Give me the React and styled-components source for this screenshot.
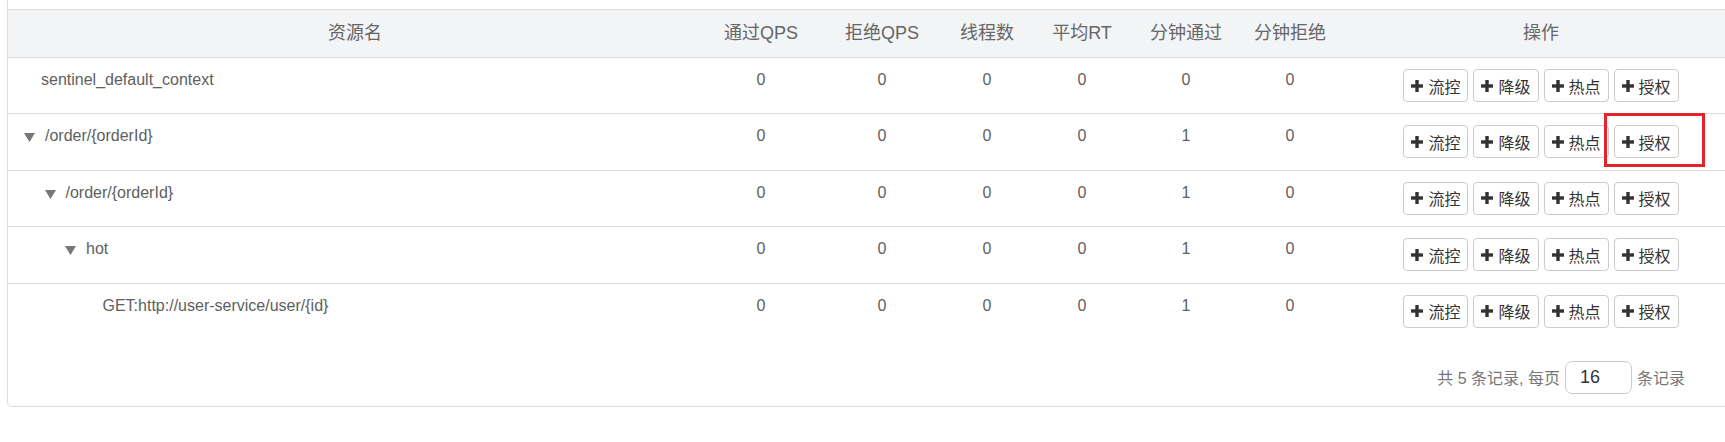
import React from "react"
import styled, { createGlobalStyle } from "styled-components"

const GlobalStyle = createGlobalStyle`
  body {
    margin: 0;
    background: #fff;
    overflow: hidden;
    font-family: "Liberation Sans", Arial, "Noto Sans CJK SC", sans-serif;
  }
`

const Panel = styled.div`
  box-sizing: border-box;
  width: 1734px;
  margin-left: 7px;
  padding-top: 9px;
  border: 1px solid #dcdcdc;
  border-top: none;
  border-radius: 0 0 5px 5px;
  background: #fff;
`

const Table = styled.table`
  width: 100%;
  border-collapse: collapse;
  table-layout: fixed;
`

const HeadCell = styled.th`
  padding: 0;
  height: 47px;
  line-height: 47px;
  background: #f3f4f6;
  border-top: 1px solid #dcdcdc;
  border-bottom: 1px solid #dcdcdc;
  font-size: 18px;
  font-weight: 400;
  color: #666;
  text-align: center;
`

const Row = styled.tr`
  td {
    border-bottom: 1px solid #dcdcdc;
  }
  &:last-child td {
    border-bottom: none;
  }
`

const Cell = styled.td`
  padding: 11px 8px 11.4px;
  vertical-align: top;
  line-height: 22px;
  font-size: 16px;
  color: #606060;
  text-align: center;
`

const NameCell = styled(Cell)`
  text-align: left;
  padding-left: ${(p) => 16 + p.$level * 20.5}px;
  white-space: nowrap;
`

const Toggle = styled.svg`
  display: inline-block;
  width: 11px;
  height: 9px;
  margin-right: 10px;
  vertical-align: -1px;
`

const LeafSpacer = styled.span`
  display: inline-block;
  width: 17px;
`

const ButtonGroup = styled.div`
  display: flex;
  justify-content: center;
  gap: 5px;
`

const ActionButton = styled.button`
  box-sizing: border-box;
  display: inline-flex;
  align-items: center;
  gap: 5px;
  height: 33px;
  padding: 0 7px;
  border: 1px solid #ccc;
  border-radius: 4px;
  background: #fff;
  font-family: inherit;
  font-size: 16px;
  color: #333;
  cursor: pointer;
`

const HighlightWrap = styled.span`
  position: relative;
  display: inline-flex;
`

const Highlight = styled.span`
  position: absolute;
  left: -10px;
  top: -12px;
  width: 101px;
  height: 54px;
  box-sizing: border-box;
  border: 3px solid #e3242b;
  pointer-events: none;
`

const Footer = styled.div`
  display: flex;
  justify-content: flex-end;
  align-items: center;
  gap: 5px;
  padding: 22px 55px 12px 0;
  font-size: 16px;
  color: #777;
`

const PageInput = styled.input`
  box-sizing: border-box;
  width: 67px;
  height: 33px;
  padding: 0 0 0 14px;
  border: 1px solid #ccc;
  border-radius: 7px;
  font-family: inherit;
  font-size: 18px;
  color: #333;
  outline: none;
`

const PlusIcon = () => (
  <svg width="12" height="12" viewBox="0 0 12 12">
    <rect x="4.3" y="0" width="3.4" height="12" fill="#333" />
    <rect x="0" y="4.3" width="12" height="3.4" fill="#333" />
  </svg>
)

const columns = [
  { title: "资源名", width: 694 },
  { title: "通过QPS", width: 118 },
  { title: "拒绝QPS", width: 124 },
  { title: "线程数", width: 86 },
  { title: "平均RT", width: 104 },
  { title: "分钟通过", width: 104 },
  { title: "分钟拒绝", width: 104 },
  { title: "操作", width: 398 },
]

const rows = [
  { name: "sentinel_default_context", level: 0, leaf: true, stats: [0, 0, 0, 0, 0, 0] },
  { name: "/order/{orderId}", level: 0, leaf: false, stats: [0, 0, 0, 0, 1, 0], highlight: true },
  { name: "/order/{orderId}", level: 1, leaf: false, stats: [0, 0, 0, 0, 1, 0] },
  { name: "hot", level: 2, leaf: false, stats: [0, 0, 0, 0, 1, 0] },
  { name: "GET:http://user-service/user/{id}", level: 3, leaf: true, stats: [0, 0, 0, 0, 1, 0] },
]

const actions = ["流控", "降级", "热点", "授权"]

const Actions = ({ highlight }) => (
  <ButtonGroup>
    {actions.map((a) => {
      const btn = (
        <ActionButton key={a}>
          <PlusIcon />
          {a}
        </ActionButton>
      )
      if (highlight && a === "授权") {
        return (
          <HighlightWrap key={a}>
            {btn}
            <Highlight />
          </HighlightWrap>
        )
      }
      return btn
    })}
  </ButtonGroup>
)

export default function App() {
  return (
    <>
      <GlobalStyle />
      <Panel>
        <Table>
          <colgroup>
            {columns.map((c) => (
              <col key={c.title} style={{ width: c.width }} />
            ))}
          </colgroup>
          <thead>
            <tr>
              {columns.map((c) => (
                <HeadCell key={c.title}>{c.title}</HeadCell>
              ))}
            </tr>
          </thead>
          <tbody>
            {rows.map((r, i) => (
              <Row key={i}>
                <NameCell $level={r.level}>
                  {r.leaf ? (
                    <LeafSpacer />
                  ) : (
                    <Toggle viewBox="0 0 11 9">
                      <polygon points="0,0 11,0 5.5,9" fill="#777" />
                    </Toggle>
                  )}
                  {r.name}
                </NameCell>
                {r.stats.map((s, j) => (
                  <Cell key={j}>{s}</Cell>
                ))}
                <Cell>
                  <Actions highlight={r.highlight} />
                </Cell>
              </Row>
            ))}
          </tbody>
        </Table>
        <Footer>
          <span>共 5 条记录, 每页</span>
          <PageInput defaultValue="16" />
          <span>条记录</span>
        </Footer>
      </Panel>
    </>
  )
}
